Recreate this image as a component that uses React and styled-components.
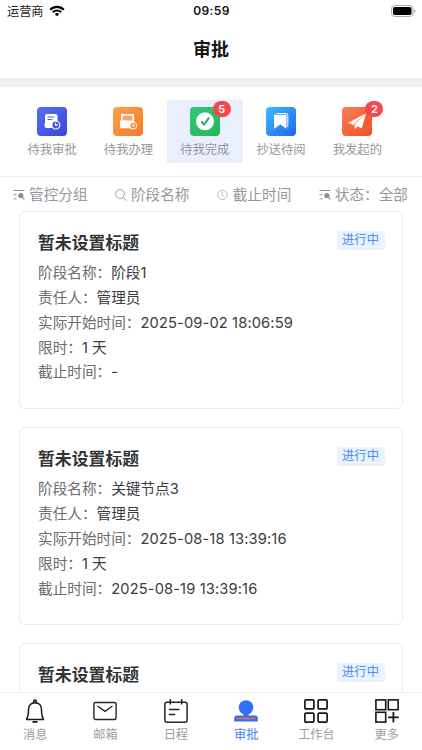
import styled, { createGlobalStyle } from "styled-components";

const GlobalStyle = createGlobalStyle`
  * {
    box-sizing: border-box;
  }
  body {
    margin: 0;
    background: #fff;
    font-family: Inter, "Noto Sans CJK SC", sans-serif;
    overflow: hidden;
  }
`;

const Page = styled.div`
  width: 100%;
  height: 100vh;
  display: flex;
  flex-direction: column;
  overflow: hidden;
  background: #fff;
`;

const StatusBar = styled.div`
  height: 22px;
  flex: none;
  display: grid;
  grid-template-columns: 1fr auto 1fr;
  align-items: center;
  padding: 0 6px 0 7px;
  font-size: 12.2px;
  line-height: 22px;
  color: #222;
`;

const Carrier = styled.div`
  display: flex;
  align-items: center;
  gap: 5px;
  line-height: 20px;
  padding-top: 1px;

  svg {
    margin-top: -2px;
  }
`;

const Clock = styled.div`
  font-weight: 600;
  font-size: 12px;
  letter-spacing: 0.35px;
  color: #111;
`;

const Battery = styled.div`
  display: flex;
  justify-content: flex-end;
`;

const Header = styled.h1`
  height: 56px;
  flex: none;
  margin: 0;
  text-align: center;
  font-size: 18px;
  font-weight: 700;
  line-height: 56px;
  color: #151515;
`;

const Band = styled.div`
  height: 9px;
  flex: none;
  background: #efeff4;
`;

const Categories = styled.div`
  height: 90px;
  flex: none;
  display: flex;
  padding: 13px 0 0 14px;
  border-bottom: 1px solid #ededee;
`;

const Category = styled.div`
  width: 76.3px;
  height: 63px;
  display: flex;
  flex-direction: column;
  align-items: center;
  padding-top: 7px;
  background: ${(props) => (props.$active ? "#e9effd" : "transparent")};
`;

const CategoryIcon = styled.div`
  position: relative;
  width: 30px;
  height: 29px;
  border-radius: 4px;
  background: ${(props) => props.$fill};

  svg {
    display: block;
  }
`;

const CategoryLabel = styled.div`
  margin-top: 4px;
  font-size: 12.3px;
  line-height: 19px;
  color: #95979d;
`;

const Badge = styled.span`
  position: absolute;
  top: -6px;
  right: -11px;
  width: 18px;
  height: 16px;
  border-radius: 8px;
  background: #f5484f;
  color: #fff;
  font-size: 11px;
  font-weight: 600;
  line-height: 16px;
  text-align: center;
`;

const Filters = styled.div`
  height: 33.6px;
  flex: none;
  display: flex;
  justify-content: space-between;
  align-items: center;
  padding: 2px 14px 0 13px;
`;

const Filter = styled.div`
  display: flex;
  align-items: center;
  gap: 4px;
  font-size: 14.65px;
  line-height: 22px;
  color: #95979d;
`;

const List = styled.div`
  flex: 1;
  min-height: 0;
  overflow: hidden;
  display: flex;
  flex-direction: column;
  gap: 18px;
  padding: 0 19px;
`;

const Card = styled.div`
  height: 198.3px;
  flex: none;
  padding: 18px 17.5px 0 18px;
  border: 1px solid #ebebec;
  border-radius: 6px;
`;

const CardHead = styled.div`
  display: flex;
  justify-content: space-between;
  align-items: flex-start;
  height: 31.2px;
`;

const CardTitle = styled.h2`
  margin: 0;
  font-size: 16.85px;
  font-weight: 700;
  line-height: 26px;
  color: #333436;
`;

const Tag = styled.span`
  margin-top: 1px;
  width: 48px;
  height: 19px;
  border-radius: 3px;
  background: #e9f2fd;
  color: #4a90ee;
  font-size: 12.3px;
  line-height: 18px;
  text-align: center;
`;

const Field = styled.div`
  font-size: 14.65px;
  line-height: 24.9px;
  white-space: nowrap;
  color: #6a6c70;
`;

const Value = styled.span`
  color: #3a3b3e;
  letter-spacing: ${(props) => (props.$wide ? "0.14px" : "0")};
`;

const TabBar = styled.nav`
  height: 58px;
  flex: none;
  display: flex;
  background: #fff;
  border-top: 1px solid #ececee;
`;

const Tab = styled.div`
  flex: 1;
  display: flex;
  flex-direction: column;
  align-items: center;
  padding-top: 6px;
  font-size: 12.2px;
  line-height: 18px;
  color: ${(props) => (props.$active ? "#3f80e8" : "#9c9da5")};

  svg {
    display: block;
    margin-bottom: 3px;
  }
`;

const WifiIcon = () => (
  <svg width="16" height="12" viewBox="0 0 16 12">
    <path d="M1.2 4.7a9.6 9.6 0 0 1 13.6 0" fill="none" stroke="#000" strokeWidth="2.1" />
    <path d="M3.8 7.3a5.9 5.9 0 0 1 8.4 0" fill="none" stroke="#000" strokeWidth="2" />
    <path d="M8 11.3 5.8 9.1a3.1 3.1 0 0 1 4.4 0z" />
  </svg>
);

const BatteryIcon = () => (
  <svg width="25" height="12" viewBox="0 0 25 12">
    <rect x="0.5" y="0.5" width="21.5" height="11" rx="3.3" fill="none" stroke="#aaa" />
    <rect x="2" y="2" width="18.5" height="8" rx="1.8" />
    <path d="M23.3 4.2v3.6c1.3-.6 1.3-3 0-3.6z" fill="#888" />
  </svg>
);

const ApproveIcon = () => (
  <svg width="30" height="29" viewBox="0 0 30 29">
    <path d="M10 7h8.5q2 0 2 2v12h-11q-2 0-2-2v-2.5H8V9q0-2 2-2z" fill="#fff" />
    <path d="M10.500 10h7M10.500 12.500h5" stroke="#4d62ec" strokeWidth="1.1" />
    <circle cx="18.8" cy="18" r="4" fill="#4556e4" stroke="#fff" strokeWidth="1.2" />
    <path d="M18.500 15.700v2.500h2.300" fill="none" stroke="#fff" strokeWidth="1.2" />
  </svg>
);

const HandleIcon = () => (
  <svg width="30" height="29" viewBox="0 0 30 29">
    <path d="M8 7h13v8H8z" fill="#fff" />
    <path d="M9.500 8.700h10v4.800h-10z" fill="#f9a568" />
    <path d="M7 13.500h5l1.500 1H22v6.800H8q-1 0-1-1z" fill="#fff" />
    <circle cx="20.3" cy="18.700" r="3.400" fill="#f98937" stroke="#fff" strokeWidth="1" />
    <path d="M20 16.800v2.200h1.900" fill="none" stroke="#fff" strokeWidth="1.100" />
  </svg>
);

const DoneIcon = () => (
  <svg width="30" height="29" viewBox="0 0 30 29">
    <circle cx="15" cy="14.300" r="9" fill="#fff" />
    <path d="m11.300 14.200 2.700 3.400 5-7" fill="none" stroke="#27b25e" strokeWidth="2" />
  </svg>
);

const CopyIcon = () => (
  <svg width="30" height="29" viewBox="0 0 30 29">
    <path d="M10.500 6.500H20q1.800 0 1.800 1.800V20" fill="none" stroke="#fff" strokeWidth="1" />
    <path d="M8 7.800h12.500v14L14.300 17.500 8 21.800z" fill="#fff" />
  </svg>
);

const SendIcon = () => (
  <svg width="30" height="29" viewBox="0 0 30 29">
    <path d="M24 6.200 6.200 15.700l5 2.200z" fill="#fff" />
    <path d="M24 6.200 12.500 17.800l.5 4.700 2.300-2.900 4.500 1.600z" fill="#fff" />
  </svg>
);

const GroupIcon = () => (
  <svg width="12" height="12" viewBox="0 0 12 12" fill="none" stroke="#8d8f98">
    <path d="M.5 1.500h10.800M.5 5.700h3M.5 9.800h3" />
    <circle cx="7.800" cy="6.500" r="2.600" fill="#8d8f98" stroke="none" />
    <path d="m9.300 8.300 2 2" strokeWidth="1.200" />
  </svg>
);

const SearchIcon = () => (
  <svg width="12" height="12" viewBox="0 0 12 12" fill="none" stroke="#9a9ba2" strokeWidth="0.9">
    <circle cx="5" cy="5" r="4.4" />
    <path d="m8.200 8.200 3.500 3.500" />
  </svg>
);

const TimeIcon = () => (
  <svg width="12" height="12" viewBox="0 0 12 12" fill="none" stroke="#aaabb1" strokeWidth="0.8">
    <circle cx="5.500" cy="6" r="4.700" />
    <path d="M5.300 3v3.200L7.500 8" />
  </svg>
);

const BellIcon = () => (
  <svg width="24" height="24" viewBox="0 0 24 24" fill="none" stroke="#17171a" strokeWidth="1.5">
    <circle cx="12" cy="2.200" r="1.300" />
    <path d="M3 20.500h18" />
    <path d="M3.400 20.300C5.500 17.500 5.500 15 5.500 10.500c0-4 2.600-6.800 6.500-6.800s6.500 2.800 6.500 6.800c0 4.500 0 7 2.100 9.800" />
    <path d="M9.500 22.900h5" strokeWidth="1.800" />
  </svg>
);

const MailIcon = () => (
  <svg width="24" height="24" viewBox="0 0 24 24" fill="none" stroke="#25262a" strokeWidth="1.4">
    <rect x="0.900" y="3.500" width="22.200" height="17" rx="1.800" />
    <path d="m4.500 7 7.500 5.300L19.500 7" />
  </svg>
);

const CalendarIcon = () => (
  <svg width="24" height="24" viewBox="0 0 24 24" fill="none" stroke="#25262a" strokeWidth="1.5">
    <rect x="0.900" y="3.200" width="22.200" height="20" rx="2" />
    <path d="M6.300 0v5.500M17.700 0v5.500M5 10.500h10.500M4.800 15.500h6.500" />
  </svg>
);

const StampIcon = () => (
  <svg width="24" height="24" viewBox="0 0 24 24" fill="#316ff6">
    <circle cx="12" cy="8.500" r="7.300" />
    <path d="M9.500 13h5v3.500H21q2.800 0 2.800 3V22q0 .5-.7.500H.9Q.2 22.500.2 22v-2.500q0-3 2.800-3h6.500z" />
    <path d="M2.500 19.400h19" stroke="#cf7350" strokeWidth="1.8" />
  </svg>
);

const GridIcon = () => (
  <svg width="24" height="24" viewBox="0 0 24 24" fill="none" stroke="#17171a" strokeWidth="1.7">
    <rect x="0.900" y="0.900" width="9" height="9" rx="1" />
    <rect x="14.100" y="0.900" width="9" height="9" rx="1" />
    <rect x="0.900" y="14.100" width="9" height="9" rx="1" />
    <rect x="14.100" y="14.100" width="9" height="9" rx="1" />
  </svg>
);

const MoreIcon = () => (
  <svg width="24" height="24" viewBox="0 0 24 24" fill="none" stroke="#17171a" strokeWidth="1.6">
    <rect x="0.900" y="0.900" width="9.800" height="9.800" />
    <rect x="13.300" y="0.900" width="9.800" height="9.800" />
    <rect x="0.900" y="13.300" width="9.800" height="9.800" />
    <path d="M18.400 13v10.500M13 18.300h10.800" strokeWidth="1.8" />
  </svg>
);

const categories = [
  { label: "待我审批", icon: <ApproveIcon />, fill: "linear-gradient(135deg, #5570f5, #3c45d8)" },
  { label: "待我办理", icon: <HandleIcon />, fill: "linear-gradient(135deg, #fba14c, #f6792a)" },
  { label: "待我完成", icon: <DoneIcon />, fill: "linear-gradient(135deg, #35c578, #25b957)", badge: 5, active: true },
  { label: "抄送待阅", icon: <CopyIcon />, fill: "linear-gradient(135deg, #3dbcfb, #2264f2)" },
  { label: "我发起的", icon: <SendIcon />, fill: "linear-gradient(135deg, #fa8057, #ef5023)", badge: 2 },
];

const filters = [
  { label: "管控分组", icon: <GroupIcon /> },
  { label: "阶段名称", icon: <SearchIcon /> },
  { label: "截止时间", icon: <TimeIcon /> },
  { label: "状态：全部", icon: <GroupIcon /> },
];

const cards = [
  { stage: "阶段1", owner: "管理员", start: "2025-09-02 18:06:59", limit: "1 天", end: "-" },
  { stage: "关键节点3", owner: "管理员", start: "2025-08-18 13:39:16", limit: "1 天", end: "2025-08-19 13:39:16" },
  {},
];

const tabs = [
  { label: "消息", icon: <BellIcon /> },
  { label: "邮箱", icon: <MailIcon /> },
  { label: "日程", icon: <CalendarIcon /> },
  { label: "审批", icon: <StampIcon />, active: true },
  { label: "工作台", icon: <GridIcon /> },
  { label: "更多", icon: <MoreIcon /> },
];

function TaskCard({ task }) {
  return (
    <Card>
      <CardHead>
        <CardTitle>暂未设置标题</CardTitle>
        <Tag>进行中</Tag>
      </CardHead>
      {task.stage && (
        <>
          <Field>阶段名称：<Value>{task.stage}</Value></Field>
          <Field>责任人：<Value>{task.owner}</Value></Field>
          <Field>实际开始时间：<Value $wide>{task.start}</Value></Field>
          <Field>限时：<Value>{task.limit}</Value></Field>
          <Field>截止时间：<Value $wide>{task.end}</Value></Field>
        </>
      )}
    </Card>
  );
}

function App() {
  return (
    <Page>
      <GlobalStyle />
      <StatusBar>
        <Carrier>运营商 <WifiIcon /></Carrier>
        <Clock>09:59</Clock>
        <Battery><BatteryIcon /></Battery>
      </StatusBar>
      <Header>审批</Header>
      <Band />
      <Categories>
        {categories.map((item) => (
          <Category key={item.label} $active={item.active}>
            <CategoryIcon $fill={item.fill}>
              {item.icon}
              {item.badge && <Badge>{item.badge}</Badge>}
            </CategoryIcon>
            <CategoryLabel>{item.label}</CategoryLabel>
          </Category>
        ))}
      </Categories>
      <Filters>
        {filters.map((item) => (
          <Filter key={item.label}>
            {item.icon}
            {item.label}
          </Filter>
        ))}
      </Filters>
      <List>
        {cards.map((task, i) => (
          <TaskCard key={i} task={task} />
        ))}
      </List>
      <TabBar>
        {tabs.map((item) => (
          <Tab key={item.label} $active={item.active}>
            {item.icon}
            {item.label}
          </Tab>
        ))}
      </TabBar>
    </Page>
  );
}

export default App;
